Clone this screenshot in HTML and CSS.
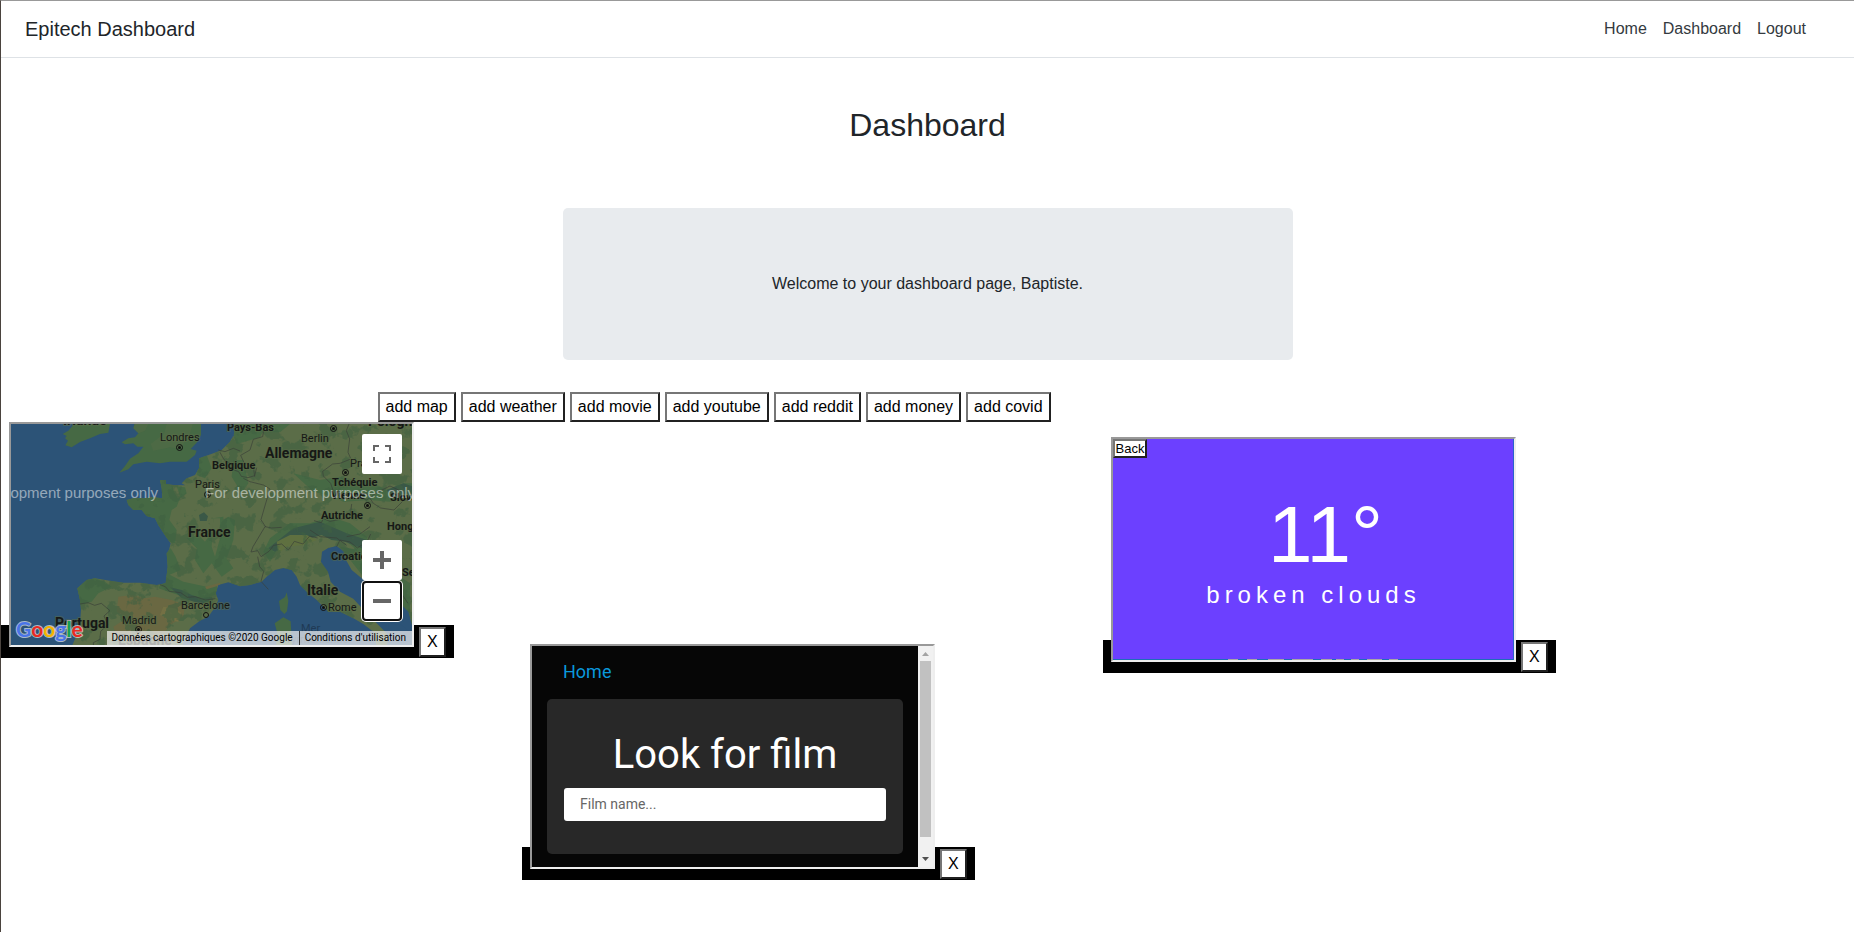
FILE: index.html
```html
<!DOCTYPE html>
<html lang="en">
<head>
<meta charset="utf-8">
<title>Epitech Dashboard</title>
<link rel="stylesheet" href="styles.css">
</head>
<body>
<header class="topbar">
  <a class="brand" href="#">Epitech Dashboard</a>
  <nav class="links">
    <a href="#">Home</a>
    <a href="#">Dashboard</a>
    <a href="#">Logout</a>
  </nav>
</header>
<main>
  <h1 class="title">Dashboard</h1>
  <section class="welcome"><p>Welcome to your dashboard page, Baptiste.</p></section>
  <div class="toolbar">
    <button class="btn">add map</button>
    <button class="btn">add weather</button>
    <button class="btn">add movie</button>
    <button class="btn">add youtube</button>
    <button class="btn">add reddit</button>
    <button class="btn">add money</button>
    <button class="btn">add covid</button>
  </div>

  <section class="canvas">
    <article class="widget widget-map">
      <div class="frame map">
        <svg class="map-art" viewBox="0 0 401 221" role="img" aria-label="Map of Europe">
          <defs>
            <filter id="mottle" x="0" y="0" width="100%" height="100%" color-interpolation-filters="sRGB">
              <feTurbulence type="fractalNoise" baseFrequency="0.022" numOctaves="4" seed="11"/>
              <feColorMatrix type="matrix" values="0 0 0 0 0.25  0 0 0 0 0.38  0 0 0 0 0.26  14 0 0 0 -7.6"/>
            </filter>
            <clipPath id="land">
              <path d="M703 42V70L690 95 665 120 640 130 598 145 597 175 585 195 560 205 545 220 555 226 520 225 498 222 497 210 480 210 485 235 487 265 460 262 430 265 400 265 380 270 385 285 400 300 425 300 440 318 465 325 475 345 498 380 512 400 507 420 500 430 503 470 497 520 470 525 420 518 370 518 330 512 285 505 260 510 232 535 240 570 243 600 240 640 228 680 215 710H545L570 655 600 632 625 620 645 592 655 570 647 550 655 525 685 517 720 529 750 525 785 515 800 500 825 480 850 474 875 480 890 500 900 525 925 550 950 570 965 585 985 605 1020 605 1060 625 1090 642 1120 665 1130 710H1240V42Z"/>
            </clipPath>
          </defs>
          <rect width="401" height="221" fill="#2c5377"/>
          <g transform="scale(.33333) translate(-33 -42)">
            <path fill="#466944" d="M188 72L205 62 222 42H330L325 68 300 72 270 85 240 96 215 112 196 106 204 92 195 85 200 78Z"/>
            <path fill="#466944" d="M403 42L400 55 415 70 405 82 385 85 365 97 375 103 400 100 412 110 430 110 415 130 390 146 375 168 358 188 385 178 400 163 440 155 480 160 510 155 560 155 585 135 590 122 572 117 590 98 603 75V42Z"/>
            <path fill="#5b6d48" d="M400 55l15 15 20-8 10-20h-40zM500 42l-8 30-40 30 8 20 50-10 30 5 30-45 8-30z" opacity=".35"/>
            <g clip-path="url(#land)">
              <rect x="200" y="42" width="1050" height="680" fill="#5b6d48"/>
              <path fill="#466944" d="M370 255H487L478 205 505 205 510 228 555 232 560 250 540 265 530 290 515 300 508 330 530 360 525 400 490 390 440 330 370 300ZM590 145l30-10 15 40-20 30-25-10zM497 425l15-10 15 25 15 40-35 15-20-10zM560 385l35-10 20 20 35-50 35-25 20 10-5 60-20 55 20 30-35 25-30-40-25 30-25-40 5-35zM500 490l50 25 70 15 30-5 5 25-60 25-60-20-60-20zM225 520l50-20 40 15 20 15-40 20-20 25-35 10zM690 42l110 0-20 40-70 20zM640 325l30-5 5 80-20 70-20-20z"/>
              <path fill="#5b6d48" d="M640 325l20 0 0 60-15 55-10-30zM518 228l12 0 10 30-6 8-12-20z"/>
              <path fill="#3a5847" d="M597 315l15-8 12 12-4 14-20 0zM510 532l35 8 30 15 30 10 30-5 5 10-35 12-60-18z"/>
              <path fill="#466944" d="M700 150l30 0 15 70-20 30-30-50zM790 42h80l-30 25-35 0zM880 190l80 20 60-10 40 20 40-10 60 30 50-20 60 0v50l-60-10-40 15-60-5-80 5-30-15-60-15zM870 340l60 0 60-20 60 20 50 40 30 60-50-10-50-45-60-20-80 10-50 30-30 50-20-30 20-40zM880 520l30 10 40 50 60 45 70 30-20 10-80-40-60-40-40-20zM1020 410l60 10 60 40 90 60v90l-60-40-80-70z"/>
              <path fill="#3a5847" d="M880 355l80-20 80 35 60 20-15 25-50-20-40-5-30-15-70 20-70 30-20-10zM1160 240l50-20 30 10v30l-60 5z"/>
              <path fill="#5f7040" d="M830 395l40-20 50 0 30 15-40 15-50 5-25 20z"/>
              <path fill="#6a6842" d="M355 560l40-5 40 10 30-5 50 10 40 15-5 35-40 25-30 40-40-10-30 10-60-5-10-30 40-25-30-20zM615 530l45-12 0 8-40 12z"/>
              <path fill="#747044" d="M490 590l35 5 20 15-10 25-30-5-25-15z"/>
              <rect x="200" y="42" width="1050" height="680" filter="url(#mottle)" opacity=".6"/>
              <path fill="#2c5377" d="M966 425L985 414 1010 408 1030 424 1038 450 1055 480 1085 505 1130 535 1190 570 1225 605 1240 660V720H1180L1160 670 1100 610 1060 566 1020 545 992 515 984 485 963 455ZM690 62l10-5 2 20-12 14z"/>
              <path fill="#2c5377" d="M1165 640l40 5 35 30v45h-80z"/>
            </g>
            <path fill="#466944" d="M860 547l5 25-4 32-8 8-12-12-4-27 18-12zM824 640l26-18 22 12 4 71h-48l3-40z"/>
            <g fill="none" stroke="#3a3f38" stroke-width="2" stroke-linejoin="round">
              <path d="M655 120l20 5 25-10 20 8M660 127l12 22 20 12 8 18 16 6 8 14 20 4 20-6 6-24M730 205l20 10 40 10 20 12 -15 50-12 42 14 22M764 200l-4-30-28-12-10-22 28-16 10-32 28-8 6-38M1047 42l-8 20 10 25-5 40 8 18M1050 148l-30 12-22 2-30 22 2 14 22 22 8 24 28 22 40-4 32 8 30-22 40-20 30 14M1100 250l20 30 22 14 40 6 30-30 24-2M1055 282l-5 40-60 12-20-8-6 12-22-6M845 352l-30 2-20-4-36 60 -6 16 20-4 10 18 24-16 14-18 24-4 20 18 18-26 26 8 20-24 24 6M773 440l6 30 12 14-8 30 22 24M930 360l30 20 50 4 30 22M1040 380l40-8 30-22M1010 410l10-20 30 6 22 18 30-20 10-22M1150 440l0 60 24 34 30 16 20 30M240 582l24-4 20 8 20-6 26 22-18 16 12 26-22 20-2 24-20 10 2 22M480 524l16 6 12 14 34 4 20 14 24-2 30 10 30-4"/>
            </g>
          </g>
          <g class="dots">
            <circle cx="168.500" cy="23.500" r="3"/><circle cx="196.500" cy="70.500" r="3"/><circle cx="322.500" cy="4.500" r="3"/><circle cx="334.500" cy="48.500" r="3"/><circle cx="356.500" cy="81.500" r="3"/><circle cx="312.500" cy="183.500" r="3"/><circle cx="127.500" cy="205.500" r="3"/>
          </g>
          <g class="dot-centers">
            <circle cx="168.500" cy="23.500" r="1.500"/><circle cx="196.500" cy="70.500" r="1.500"/><circle cx="322.500" cy="4.500" r="1.500"/><circle cx="334.500" cy="48.500" r="1.500"/><circle cx="356.500" cy="81.500" r="1.500"/><circle cx="312.500" cy="183.500" r="1.500"/><circle cx="127.500" cy="205.500" r="1.500"/>
          </g>
          <circle class="dots" cx="195" cy="191" r="2.500"/>
          <g class="city">
            <text x="149" y="17">Londres</text><text x="184" y="64">Paris</text><text x="290" y="18">Berlin</text><text x="339" y="43">Prague</text><text x="317" y="187">Rome</text><text x="111" y="200">Madrid</text><text x="170" y="185">Barcelone</text>
          </g>
          <g class="city strong">
            <text x="216" y="7">Pays-Bas</text><text x="201" y="45">Belgique</text><text x="321" y="62">Tchéquie</text><text x="320" y="75">Vienne</text><text x="379" y="77">Slovaquie</text><text x="310" y="95">Autriche</text><text x="376" y="106">Hongrie</text><text x="320" y="136">Croatie</text><text x="391" y="152">Serbie</text>
          </g>
          <g class="country">
            <text x="52" y="1">Irlande</text><text x="357" y="2">Pologne</text><text x="254" y="34">Allemagne</text><text x="177" y="113">France</text><text x="296" y="171">Italie</text><text x="44" y="204">Portugal</text><text x="107" y="221">Espagne</text>
          </g>
          <g class="sea"><text x="290" y="208">Mer</text><text x="274" y="219">Tyrrhénienne</text></g>
          <g class="watermark"><text x="147" y="74" text-anchor="end">For development purposes only</text><text x="194" y="74">For development purposes only</text></g>
          <text class="logo" x="5" y="213"><tspan fill="#4a74e8">G</tspan><tspan fill="#ea2a22">o</tspan><tspan fill="#f5b400">o</tspan><tspan fill="#4a74e8">g</tspan><tspan fill="#14a050">l</tspan><tspan fill="#ea2a22">e</tspan></text>
        </svg>
        <div class="credits"><span>Données cartographiques ©2020 Google</span><a href="#">Conditions d'utilisation</a></div>
        <div class="map-controls">
          <button class="map-btn" aria-label="Fullscreen"><svg width="18" height="18" viewBox="0 0 18 18"><path d="M1 6V1H6M12 1H17V6M17 12V17H12M6 17H1V12" fill="none" stroke="#666" stroke-width="2"/></svg></button>
          <div class="zoom-group">
            <button class="map-btn" aria-label="Zoom in"><svg width="18" height="18" viewBox="0 0 18 18"><path d="M7 0h4v7h7v4h-7v7H7v-7H0V7h7z" fill="#666"/></svg></button>
            <button class="map-btn focused" aria-label="Zoom out"><svg width="18" height="18" viewBox="0 0 18 18"><path d="M0 7h18v4H0z" fill="#666"/></svg></button>
          </div>
        </div>
      </div>
      <button class="btn close">X</button>
    </article>

    <article class="widget widget-movie">
      <div class="frame movie">
        <div class="movie-page">
          <a class="movie-home" href="#">Home</a>
          <div class="movie-card">
            <label class="movie-title" for="film">Look for film</label>
            <input class="movie-input" id="film" type="text" placeholder="Film name...">
          </div>
        </div>
        <div class="scrollbar">
          <svg width="7" height="4" viewBox="0 0 7 4"><path d="M0 4L3.500 0 7 4z" fill="#a3a3a3"/></svg>
          <div class="thumb"></div>
          <svg width="7" height="4" viewBox="0 0 7 4"><path d="M0 0L3.500 4 7 0z" fill="#505050"/></svg>
        </div>
      </div>
      <button class="btn close">X</button>
    </article>

    <article class="widget widget-weather">
      <div class="frame weather">
        <button class="back">Back</button>
        <div class="temp">11°</div>
        <div class="sky">broken clouds</div>
        <svg class="edge" viewBox="0 0 401 1" aria-hidden="true"><path d="M0 .5H401" stroke="#1d6fb8"/><path d="M115 .5H125M134 .5H144M155 .5H171M179 .5H200M208 .5H219M223 .5H231M238 .5H246M254 .5H269M276 .5H285" stroke="#aaa6a6"/></svg>
      </div>
      <button class="btn close">X</button>
    </article>
  </section>
</main>
</body>
</html>
```
FILE: styles.css
```css
*, *::before { box-sizing: border-box; }
body {
  margin: 0;
  min-height: 100vh;
  border-top: 1px solid #999;
  border-left: 1px solid #4a433e;
  background: #fff;
  color: #212529;
  font: 16px/24px "Liberation Sans", Arial, sans-serif;
}
a { text-decoration: none; }
.topbar {
  display: flex;
  align-items: center;
  justify-content: space-between;
  height: 57px;
  padding: 0 24px;
  border-bottom: 1px solid #dee2e6;
}
.brand { color: #212529; font-size: 20px; }
.links { display: flex; gap: 16px; margin-right: 24px; }
.links a { color: #343a40; }
.title {
  margin: 48px 0 64px;
  font-size: 32px;
  line-height: 38px;
  font-weight: 400;
  text-align: center;
}
.welcome {
  max-width: 730px;
  margin: 0 auto 32px;
  padding: 64px 32px;
  border-radius: 5px;
  background: #e8ebee;
  text-align: center;
}
.welcome p { margin: 0; }
.toolbar { display: flex; flex-wrap: wrap; gap: 5px; max-width: 1100px; margin: 0 auto; }
.btn {
  height: 30px;
  padding: 0 6px;
  border: 2px solid;
  border-color: #767676 #212121 #212121 #767676;
  background: #fff;
  color: #000;
  font: inherit;
}
.canvas { position: relative; min-height: 458px; }

.widget {
  position: absolute;
  isolation: isolate;
  display: flex;
  align-items: flex-end;
  gap: 5px;
  padding: 0 8px;
}
.widget::before {
  content: "";
  position: absolute;
  inset: auto 0 0;
  z-index: -1;
  height: 33px;
  background: #000;
}
.widget-map { left: 0; top: 0; }
.widget-movie { left: 521px; top: 222px; }
.widget-weather { left: 1102px; top: 15px; }
.frame {
  position: relative;
  width: 405px;
  height: 225px;
  margin-bottom: 11px;
  border: 2px solid;
  border-color: #999 #eee #eee #999;
  overflow: hidden;
}
.close { margin-bottom: 1px; }

.map { font-family: Roboto, sans-serif; }
.map-art { display: block; width: 100%; height: 100%; }
.dots { fill: none; stroke: #111; }
.dot-centers { fill: #111; }
.city, .country { fill: #161816; stroke: #5b6d4880; stroke-width: 2px; paint-order: stroke; }
.city { font-size: 11px; }
.strong { font-weight: 700; }
.country { font-size: 14px; font-weight: 700; }
.sea { fill: #203a55; font-size: 11px; }
.watermark { fill: #ffffff80; font: 15px "Liberation Sans", Arial, sans-serif; }
.logo { font: 700 21px Lato, sans-serif; stroke: #ffffff99; stroke-width: 2px; paint-order: stroke; }
.credits {
  position: absolute;
  right: 0;
  bottom: 0;
  display: flex;
  height: 14px;
  background: #f5f5f5b3;
  font-size: 10px;
  line-height: 14px;
  white-space: nowrap;
}
.credits > * { padding: 0 6px 0 5px; color: #000; }
.credits a { border-left: 1px solid #333; }
.map-controls {
  position: absolute;
  top: 10px;
  right: 10px;
  bottom: 24px;
  display: flex;
  flex-direction: column;
  justify-content: space-between;
}
.zoom-group { display: grid; gap: 1px; }
.map-btn {
  display: grid;
  place-items: center;
  width: 40px;
  height: 40px;
  padding: 0;
  border: 0;
  border-radius: 2px;
  background: #fff;
}
.focused { border: 2px solid #101010; border-radius: 4px; box-shadow: 0 0 0 1px #fff; }

.movie { display: flex; background: #060606; font-family: Roboto, sans-serif; }
.movie-page { flex: 1; padding: 14px 15px 0; }
.movie-home { display: block; margin: 0 16px 15px; color: #0a98dc; font-size: 18px; }
.movie-card { height: 155px; padding: 32px 17px; border-radius: 5px; background: #282828; }
.movie-title {
  display: block;
  margin-bottom: 9px;
  color: #fff;
  font-size: 40px;
  line-height: 48px;
  text-align: center;
}
.movie-input {
  display: block;
  width: 100%;
  height: 33px;
  padding: 0 16px 2px;
  border: 0;
  border-radius: 3px;
  background: #fff;
  font: 14px Roboto, sans-serif;
}
.movie-input::placeholder { color: #666; }
.scrollbar {
  display: flex;
  flex-direction: column;
  align-items: center;
  width: 15px;
  padding: 6px 0;
  background: #f1f1f1;
}
.thumb { flex: 1; width: 11px; margin: 5px 0 20px; background: #c1c1c1; }

.weather { background: #6c40ff; color: #fff; text-align: center; }
.weather::after {
  content: "";
  position: absolute;
  inset: 0 0 0 auto;
  width: 1px;
  background: #2a62cc;
}
.back {
  display: block;
  width: 34px;
  height: 19px;
  padding: 0;
  border: 2px solid;
  border-color: #767676 #212121 #212121 #767676;
  background: #fff;
  color: #000;
  font: 13px/15px "Liberation Sans", Arial, sans-serif;
}
.temp { padding: 33px 0 0 24px; font-size: 80px; line-height: 88px; }
.sky { margin-top: 2px; font-size: 24px; line-height: 28px; letter-spacing: 5px; }
.edge { position: absolute; left: 0; bottom: 0; width: 100%; height: 1px; }
```
